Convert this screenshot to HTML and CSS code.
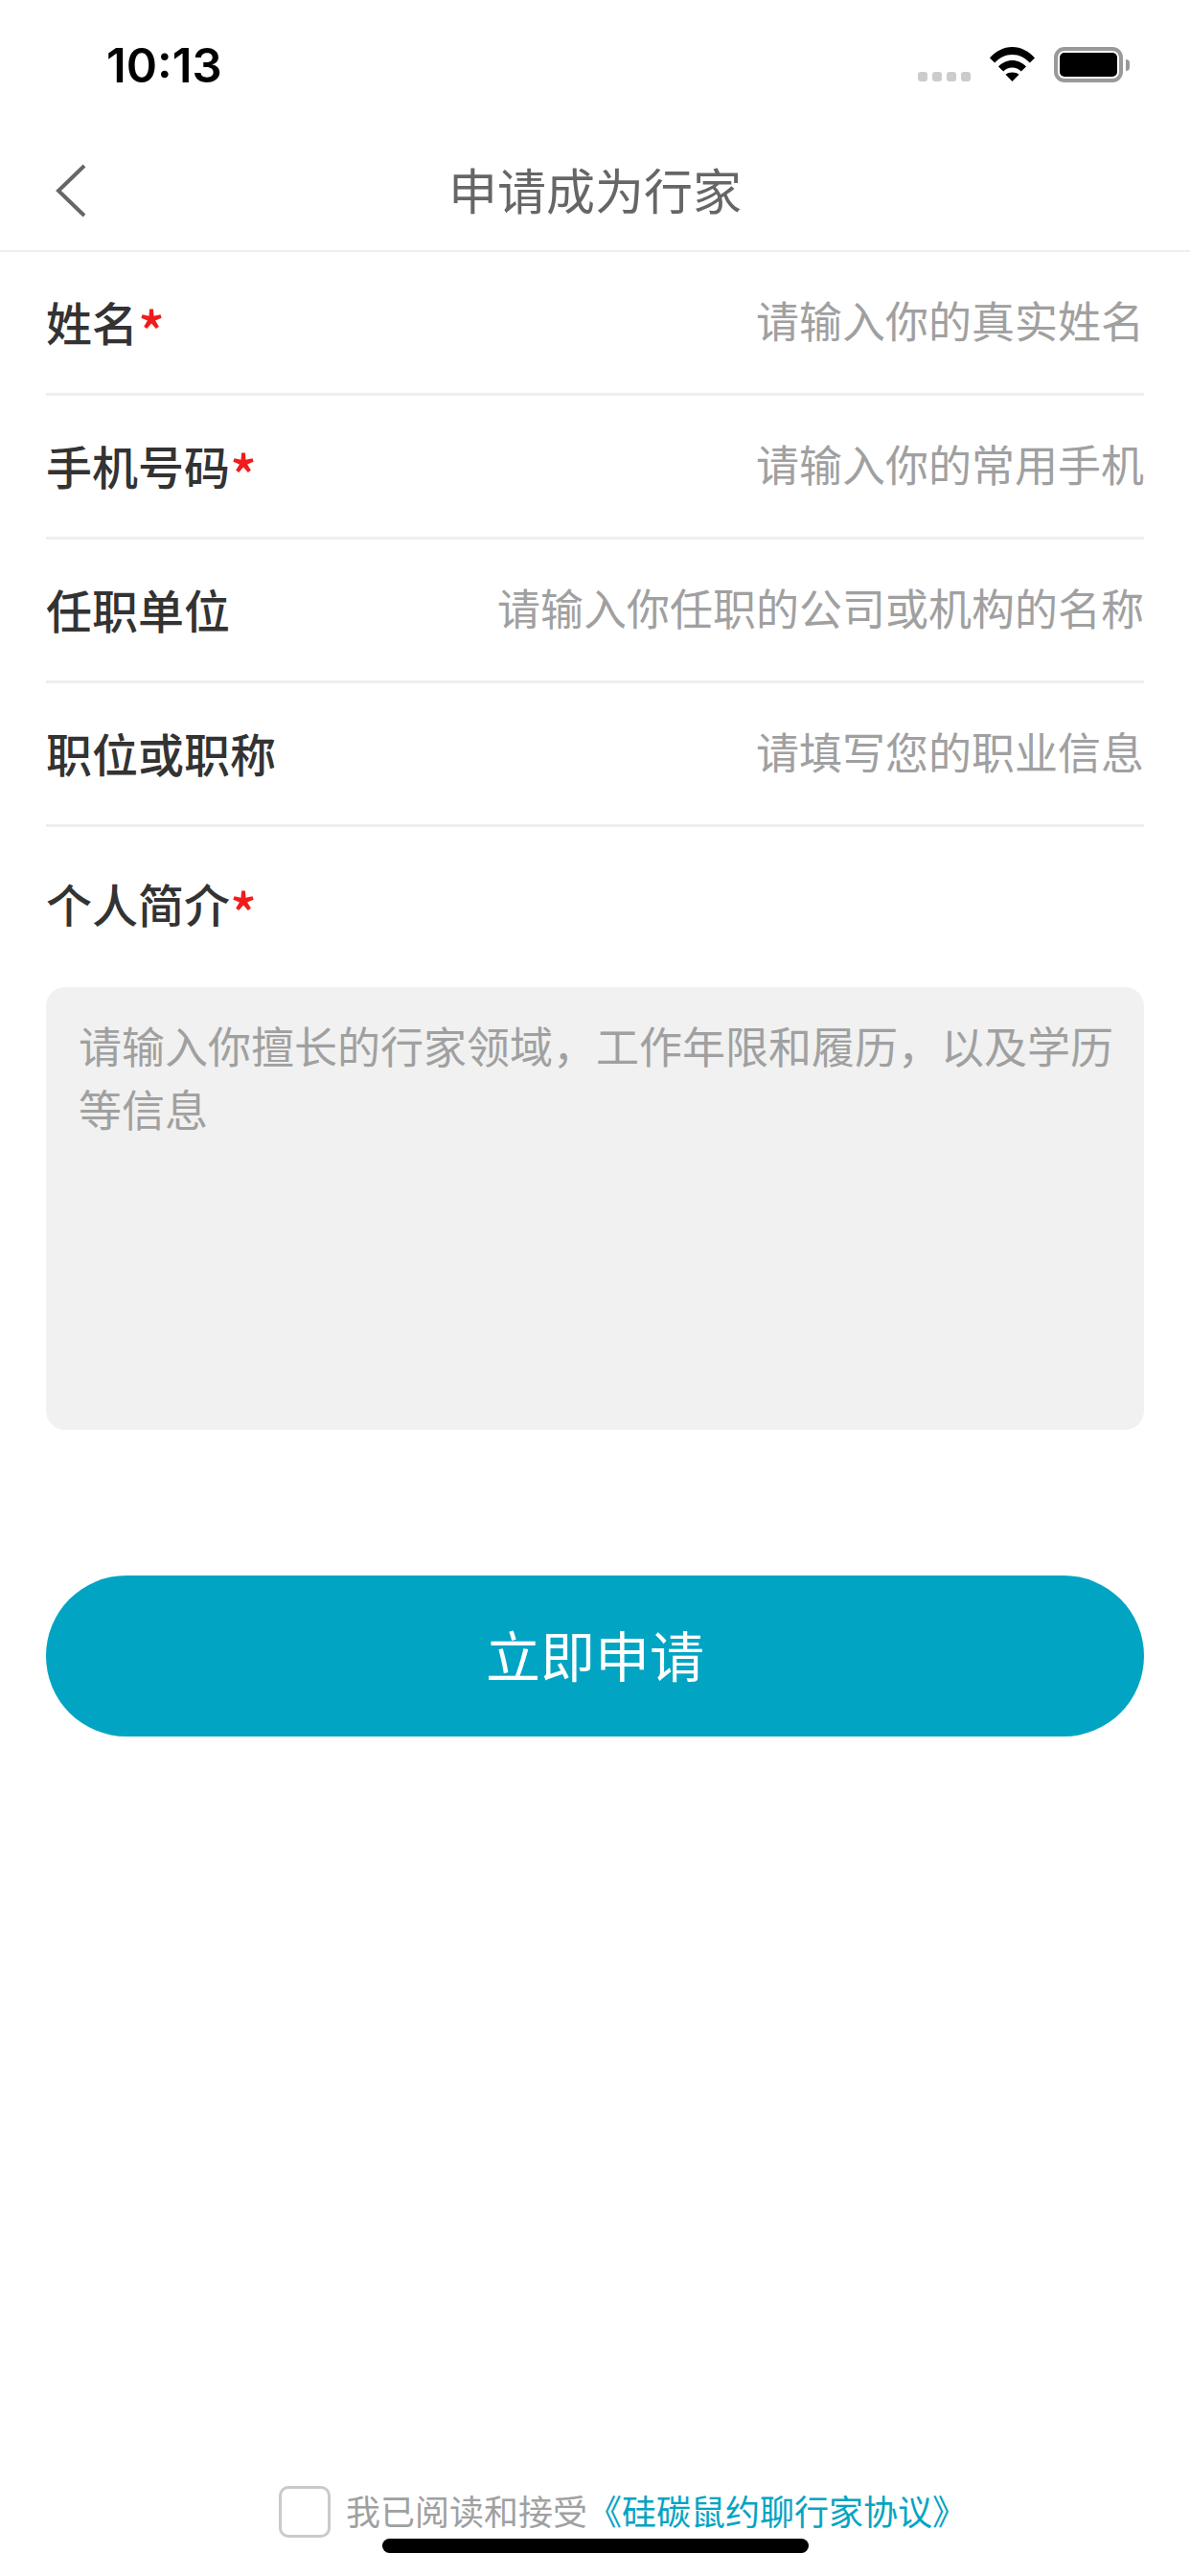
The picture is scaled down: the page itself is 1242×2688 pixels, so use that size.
FILE: index.html
```html
<!DOCTYPE html>
<html lang="zh-CN">
<head>
  <meta charset="UTF-8" />
  <meta name="viewport" content="width=device-width, initial-scale=1.0"/>
  <title>申请成为行家</title>
  <link rel="stylesheet" href="styles.css">
</head>
<body>
  <div class="status-bar">
    <span class="time">10:13</span>
    <div class="status-icons">
      <div class="signal"><i></i><i></i><i></i><i></i></div>
      <svg class="wifi" width="47" height="36" viewBox="0 0 47 36">
        <path d="M0 11.500C6 4.500 14.500 0 23.500 0S41 4.500 47 11.500L41.800 16.500C37 11.300 30.500 8 23.500 8S10 11.300 5.200 16.500Z"/>
        <path d="M9 20.500C12.800 16.500 18 14 23.500 14S34.200 16.500 38 20.500L32.800 25.500C30.300 23 27 21.500 23.500 21.500S16.700 23 14.200 25.500Z"/>
        <path d="M16.500 28.800C18.300 27.300 20.800 26.500 23.500 26.500S28.700 27.300 30.500 28.800L23.500 36Z"/>
      </svg>
      <div class="battery"><div class="battery-fill"></div></div>
      <div class="battery-cap"></div>
    </div>
  </div>

  <header class="nav">
    <svg class="back" width="32" height="56" viewBox="0 0 32 56">
      <path d="M30 2L3 28L30 54" fill="none" stroke="#666" stroke-width="4"/>
    </svg>
    <h1>申请成为行家</h1>
  </header>

  <main class="form">
    <div class="row">
      <span class="label">姓名<em>*</em></span>
      <span class="hint">请输入你的真实姓名</span>
    </div>
    <div class="row">
      <span class="label">手机号码<em>*</em></span>
      <span class="hint">请输入你的常用手机</span>
    </div>
    <div class="row">
      <span class="label">任职单位</span>
      <span class="hint">请输入你任职的公司或机构的名称</span>
    </div>
    <div class="row">
      <span class="label">职位或职称</span>
      <span class="hint">请填写您的职业信息</span>
    </div>

    <div class="intro-label"><span class="label">个人简介<em>*</em></span></div>
    <div class="intro-box">请输入你擅长的行家领域，工作年限和履历，以及学历等信息</div>

    <button class="submit">立即申请</button>
  </main>

  <footer class="agree">
    <span class="checkbox"></span>
    <span class="agree-text">我已阅读和接受<a class="agree-link">《硅碳鼠约聊行家协议》</a></span>
  </footer>
  <div class="home-bar"></div>
</body>
</html>
```

FILE: styles.css
```css
* {
  box-sizing: border-box;
}
html, body {
  height: 100%;
}
body {
  margin: 0;
  width: 1242px;
  height: 2688px;
  position: relative;
  display: flex;
  flex-direction: column;
  background-color: #fff;
  font-family: "Noto Sans CJK SC", "Noto Sans", sans-serif;
  color: #333;
}

/* status bar */
.status-bar {
  height: 132px;
  padding: 49px 63px 0 111px;
  display: flex;
  justify-content: space-between;
  align-items: flex-start;
}
.time {
  margin-top: 2px;
  font-family: Inter, sans-serif;
  font-size: 49px;
  font-weight: 600;
  line-height: 36px;
  color: #000;
}
.status-icons {
  display: flex;
  align-items: flex-start;
}
.signal {
  display: flex;
  gap: 5px;
  margin: 26px 20px 0 0;
}
.signal i {
  width: 10px;
  height: 10px;
  border-radius: 3px;
  background-color: #ccc;
}
.wifi {
  margin-right: 20px;
}
.battery {
  width: 72px;
  height: 37px;
  padding: 2px;
  border-radius: 11px;
  background-color: #fff;
  border: 4px solid #999;
}
.battery-fill {
  height: 100%;
  border-radius: 5px;
  background-color: #000;
}
.battery-cap {
  width: 4px;
  height: 12px;
  margin: 13px 0 0 3px;
  border-radius: 0 6px 6px 0;
  background-color: #999;
}

/* nav */
.nav {
  height: 131px;
  position: relative;
  display: flex;
  align-items: center;
  justify-content: center;
  border-bottom: 2px solid #eceef0;
}
.nav h1 {
  margin: 0;
  font-size: 51px;
  font-weight: 400;
  color: #666;
}
.back {
  position: absolute;
  left: 58px;
  top: 39px;
}

/* form */
.form {
  padding: 0 48px;
}
.row {
  height: 150px;
  padding-bottom: 4px;
  display: flex;
  align-items: center;
  justify-content: space-between;
  border-bottom: 3px solid #eee;
}
.label {
  font-size: 48px;
  font-weight: 500;
  color: #333;
}
.label em {
  font-size: 58px;
  line-height: 0;
  vertical-align: -13px;
  font-style: normal;
  color: #f01c1c;
}
.hint {
  margin-bottom: 2px;
  font-size: 45px;
  color: #a0a0a0;
}
.intro-label {
  height: 167px;
  padding-top: 43px;
  line-height: 72px;
}
.intro-box {
  height: 462px;
  padding: 28px 20px 14px 34px;
  border-radius: 20px;
  background-color: #f1f1f1;
  font-size: 45px;
  line-height: 66px;
  color: #a0a0a0;
}
.submit {
  display: block;
  width: 100%;
  height: 168px;
  margin-top: 152px;
  padding-bottom: 8px;
  border: 0;
  border-radius: 84px;
  background-color: #02a4c3;
  color: #fff;
  font-family: inherit;
  font-size: 57px;
}

/* footer */
.agree {
  margin-top: auto;
  margin-bottom: 40px;
  padding-left: 291px;
  display: flex;
  align-items: center;
  gap: 16px;
}
.checkbox {
  width: 54px;
  height: 54px;
  border: 3px solid #c9c9ce;
  border-radius: 10px;
}
.agree-text {
  margin-bottom: 3px;
  font-size: 36px;
  color: #a0a0a0;
}
.agree-link {
  color: #02a4c3;
}
.home-bar {
  position: absolute;
  left: 399px;
  top: 2649px;
  width: 445px;
  height: 15px;
  border-radius: 8px;
  background-color: #000;
}
```
